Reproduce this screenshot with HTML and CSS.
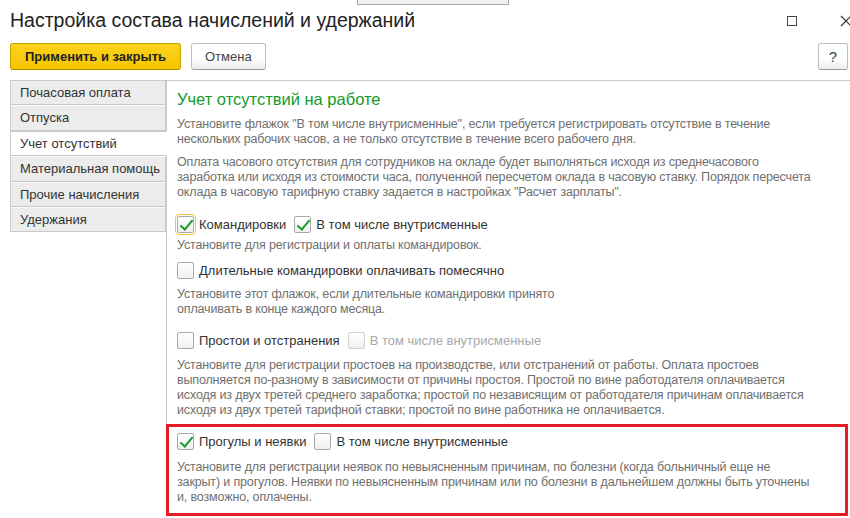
FILE: index.html
```html
<!DOCTYPE html>
<html lang="ru">

<head>
    <meta charset="UTF-8">
    <meta name="viewport" content="width=device-width, initial-scale=1.0">
    <title>Настройка состава начислений и удержаний</title>
    <link rel="stylesheet" href="styles.css">
</head>

<body>
    <div class="behind-window"></div>

    <div class="title-bar">
        <h1>Настройка состава начислений и удержаний</h1>
        <div class="window-controls">
            <span class="win-max"></span>
            <span class="win-close">
                <svg width="12" height="12" viewBox="0 0 12 12"><path d="M1 1 L11 11 M11 1 L1 11" stroke="#333" stroke-width="1.2" fill="none"/></svg>
            </span>
        </div>
    </div>

    <div class="toolbar">
        <button class="btn btn-primary">Применить и закрыть</button>
        <button class="btn">Отмена</button>
        <button class="btn btn-help">?</button>
    </div>

    <div class="main">
        <ul class="tabs">
            <li>Почасовая оплата</li>
            <li>Отпуска</li>
            <li class="active">Учет отсутствий</li>
            <li>Материальная помощь</li>
            <li>Прочие начисления</li>
            <li>Удержания</li>
        </ul>

        <div class="content">
            <h2>Учет отсутствий на работе</h2>
            <p class="note">Установите флажок "В том числе внутрисменные", если требуется регистрировать отсутствие в течение<br>нескольких рабочих часов, а не только отсутствие в течение всего рабочего дня.</p>
            <p class="note note-gap">Оплата часового отсутствия для сотрудников на окладе будет выполняться исходя из среднечасового<br>заработка или исходя из стоимости часа, полученной пересчетом оклада в часовую ставку. Порядок пересчета<br>оклада в часовую тарифную ставку задается в настройках "Расчет зарплаты".</p>

            <div class="check-row row-trips">
                <label class="check"><span class="box checked focused"></span>Командировки</label>
                <label class="check"><span class="box checked"></span>В том числе внутрисменные</label>
            </div>
            <p class="note hint-trips">Установите для регистрации и оплаты командировок.</p>

            <div class="check-row row-long">
                <label class="check"><span class="box"></span>Длительные командировки оплачивать помесячно</label>
            </div>
            <p class="note hint-long">Установите этот флажок, если длительные командировки принято<br>оплачивать в конце каждого месяца.</p>

            <div class="check-row row-idle">
                <label class="check"><span class="box"></span>Простои и отстранения</label>
                <label class="check disabled"><span class="box"></span>В том числе внутрисменные</label>
            </div>
            <p class="note hint-idle">Установите для регистрации простоев на производстве, или отстранений от работы. Оплата простоев<br>выполняется по-разному в зависимости от причины простоя. Простой по вине работодателя оплачивается<br>исходя из двух третей среднего заработка; простой по независящим от работодателя причинам оплачивается<br>исходя из двух третей тарифной ставки; простой по вине работника не оплачивается.</p>

            <div class="highlight">
                <div class="check-row">
                    <label class="check"><span class="box checked"></span>Прогулы и неявки</label>
                    <label class="check"><span class="box"></span>В том числе внутрисменные</label>
                </div>
                <p class="note hint-absent">Установите для регистрации неявок по невыясненным причинам, по болезни (когда больничный еще не<br>закрыт) и прогулов. Неявки по невыясненным причинам или по болезни в дальнейшем должны быть уточнены<br>и, возможно, оплачены.</p>
            </div>
        </div>
    </div>
</body>

</html>
```

FILE: styles.css
```css
* {
    margin: 0;
    padding: 0;
    box-sizing: border-box;
}

body {
    font-family: "Liberation Sans", Arial, sans-serif;
    background-color: #ffffff;
    color: #333;
    width: 850px;
    height: 518px;
    overflow: hidden;
    position: relative;
}

.behind-window {
    position: absolute;
    left: 357px;
    top: -10px;
    width: 152px;
    height: 15px;
    background-color: #efefef;
    border: 1px solid #a8a8a8;
}

.title-bar {
    display: flex;
    justify-content: space-between;
    align-items: center;
    height: 38px;
    padding: 3px 0 0 10px;
}

.title-bar h1 {
    font-size: 19.5px;
    font-weight: normal;
    color: #222;
}

.window-controls {
    display: flex;
    align-items: center;
    gap: 43px;
    margin-right: -2px;
}

.win-max {
    display: block;
    width: 10px;
    height: 10px;
    border: 1px solid #444;
}

.win-close svg {
    display: block;
}

.toolbar {
    display: flex;
    gap: 10px;
    padding: 5px 2px 0 10px;
    height: 42px;
}

.btn {
    height: 27px;
    padding: 0 13px;
    font-family: "Liberation Sans", Arial, sans-serif;
    font-size: 13px;
    color: #444;
    background: linear-gradient(#ffffff 60%, #ececec);
    border: 1px solid #bdbdbd;
    border-bottom-color: #9a9a9a;
    border-radius: 3px;
}

.btn-primary {
    width: 171px;
    font-weight: bold;
    color: #222;
    background: linear-gradient(#fcd21c, #f5c600);
    border-color: #c9a200;
    border-bottom-color: #a98a00;
}

.btn-help {
    margin-left: auto;
    width: 30px;
    padding: 0;
    font-size: 15px;
}

.main {
    display: flex;
    padding-left: 10px;
}

.tabs {
    list-style: none;
    width: 156px;
    flex-shrink: 0;
}

.tabs li {
    height: 25.4px;
    line-height: 24px;
    padding-left: 9px;
    font-size: 13px;
    color: #333;
    background-color: #ececec;
    border: 1px solid #c9c9c9;
    border-top-color: #fafafa;
}

.tabs li:first-child {
    border-top-color: #c9c9c9;
}

.tabs li.active {
    background-color: #ffffff;
    border-right-color: #ffffff;
    border-top-color: #c9c9c9;
    margin-right: -1px;
    position: relative;
}

.content {
    flex: 1;
    height: 440px;
    border-top: 1px solid #c9c9c9;
    border-left: 1px solid #c9c9c9;
    padding: 8px 0 0 10px;
}

.content h2 {
    font-size: 16.5px;
    font-weight: normal;
    color: #139a2c;
    line-height: 20px;
    margin-bottom: 8px;
}

.note {
    font-size: 12.5px;
    line-height: 15px;
    color: #6f6f6f;
    letter-spacing: -0.15px;
}

.note-gap {
    margin-top: 8px;
}

.check-row {
    display: flex;
    align-items: center;
    gap: 8px;
    height: 18px;
}

.check {
    display: flex;
    align-items: center;
    gap: 5px;
    font-size: 13px;
    color: #333;
}

.check.disabled {
    color: #a8a8a8;
}

.box {
    width: 17px;
    height: 17px;
    border: 1px solid #a9a9a9;
    border-radius: 2px;
    background: linear-gradient(#ffffff, #f0f0f0);
    position: relative;
}

.check.disabled .box {
    border-color: #d0d0d0;
}

.box.focused {
    outline: 1px solid #f2c443;
    outline-offset: 1px;
}

.box.checked::after {
    content: "";
    position: absolute;
    left: 5px;
    top: 0px;
    width: 5px;
    height: 11px;
    border: solid #1a9a2e;
    border-width: 0 2.5px 2.5px 0;
    transform: rotate(40deg);
}

.row-trips {
    margin-top: 15px;
}

.hint-trips {
    margin-top: 5px;
}

.row-long {
    margin-top: 8px;
}

.hint-long {
    margin-top: 8px;
}

.row-idle {
    margin-top: 14px;
}

.hint-idle {
    margin-top: 9px;
}

.highlight {
    margin: 6px 2px 0 -11px;
    border: 3px solid #e41e26;
    height: 92px;
    padding: 5px 8px 0 8px;
}

.hint-absent {
    margin-top: 10px;
}
```
